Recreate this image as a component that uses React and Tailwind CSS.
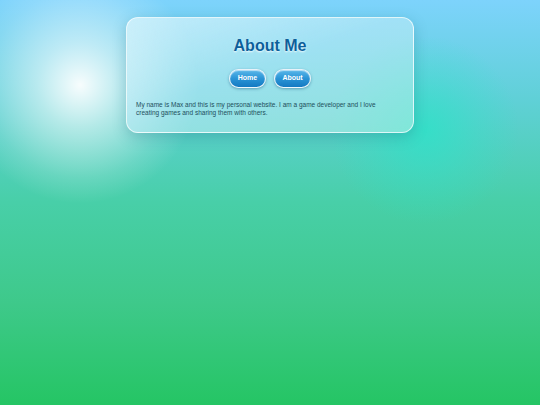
import React from "react";

export default function App() {
  return (
    <div
      className="relative min-h-[405px] w-full overflow-hidden bg-[linear-gradient(180deg,#7dd3fc_0%,#5fd0d6_25%,#48cfa8_50%,#3ec98a_75%,#25c564_100%)] font-['Liberation_Sans',Arial,sans-serif]"
    >
      {/* glows */}
      <div className="pointer-events-none absolute -left-[40px] -top-[35px] h-[240px] w-[240px] rounded-full bg-[radial-gradient(circle,rgba(255,255,255,0.95)_0%,rgba(255,255,255,0.55)_25%,rgba(255,255,255,0.15)_55%,rgba(255,255,255,0)_70%)]" />
      <div className="pointer-events-none absolute left-[330px] top-[35px] h-[190px] w-[190px] rounded-full bg-[radial-gradient(circle,rgba(45,226,200,0.8)_0%,rgba(45,226,200,0.3)_40%,rgba(45,226,200,0)_70%)]" />

      <div className="relative flex justify-center pt-[17px]">
        <div className="w-[288px] rounded-[12px] border border-white/70 bg-[linear-gradient(160deg,rgba(220,245,252,0.75)_0%,rgba(190,235,248,0.6)_45%,rgba(175,238,228,0.6)_100%)] px-[9px] pb-[15px] pt-[18px] shadow-[0_4px_14px_rgba(20,90,110,0.25)]">
          <h1 className="text-center text-[16px] font-bold leading-[20px] text-[#0d5f9a] [text-shadow:0_1px_2px_rgba(255,255,255,0.9)]">
            About Me
          </h1>
          <div className="mt-[13px] flex justify-center gap-[8px]">
            <button className="h-[19px] w-[37px] rounded-full border border-white/90 bg-[linear-gradient(180deg,#5bb8ea_0%,#2a94d6_50%,#1479c2_100%)] text-[7px] font-bold text-white shadow-[0_1px_3px_rgba(0,60,110,0.4),inset_0_1px_1px_rgba(255,255,255,0.6)]">
              Home
            </button>
            <button className="h-[19px] w-[37px] rounded-full border border-white/90 bg-[linear-gradient(180deg,#5bb8ea_0%,#2a94d6_50%,#1479c2_100%)] text-[7px] font-bold text-white shadow-[0_1px_3px_rgba(0,60,110,0.4),inset_0_1px_1px_rgba(255,255,255,0.6)]">
              About
            </button>
          </div>
          <p className="mt-[13px] w-[250px] text-[6.5px] leading-[8px] text-[#1d4f5c]">
            My name is Max and this is my personal website. I am a game developer and I love creating games and sharing them with others.
          </p>
        </div>
      </div>
    </div>
  );
}
